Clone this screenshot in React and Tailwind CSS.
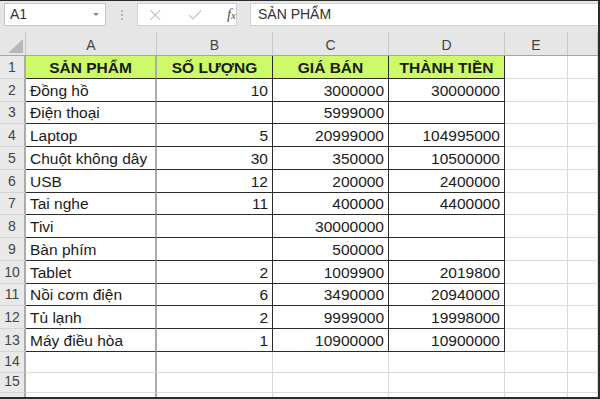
import React from 'react';

const COLS = [
  { key: 'A', w: 'w-[131px]' },
  { key: 'B', w: 'w-[116px]' },
  { key: 'C', w: 'w-[116px]' },
  { key: 'D', w: 'w-[116px]' },
  { key: 'E', w: 'w-[63px]' },
  { key: '', w: 'w-[30px]' },
];

const HEADERS = ['SẢN PHẨM', 'SỐ LƯỢNG', 'GIÁ BÁN', 'THÀNH TIỀN'];

const DATA = [
  ['Đồng hồ', '10', '3000000', '30000000'],
  ['Điện thoại', '', '5999000', ''],
  ['Laptop', '5', '20999000', '104995000'],
  ['Chuột không dây', '30', '350000', '10500000'],
  ['USB', '12', '200000', '2400000'],
  ['Tai nghe', '11', '400000', '4400000'],
  ['Tivi', '', '30000000', ''],
  ['Bàn phím', '', '500000', ''],
  ['Tablet', '2', '1009900', '2019800'],
  ['Nồi cơm điện', '6', '3490000', '20940000'],
  ['Tủ lạnh', '2', '9999000', '19998000'],
  ['Máy điều hòa', '1', '10900000', '10900000'],
];

// row heights in px, rows 1..15
const HEIGHTS = ['h-[23px]', 'h-[23px]', 'h-[22px]', 'h-[23px]', 'h-[23px]', 'h-[23px]', 'h-[22px]', 'h-[23px]', 'h-[23px]', 'h-[23px]', 'h-[22px]', 'h-[23px]', 'h-[23px]', 'h-[21px]', 'h-[20px]'];

function cellClass(ci, inTable) {
  const base = `${COLS[ci].w} shrink-0 h-full flex items-end pb-[1px] px-[4px] overflow-hidden whitespace-nowrap border-b`;
  const bottom = inTable ? 'border-b-[#2b2b2b]' : 'border-b-[#dadada]';
  let right;
  if (ci === 0) right = 'border-r-2 border-r-[#ababab]';
  else if (inTable && ci <= 3) right = 'border-r border-r-[#2b2b2b]';
  else right = 'border-r border-r-[#dadada]';
  return `${base} ${bottom} ${right}`;
}

function Row({ n, h, cells, header }) {
  const inTable = n && n <= 13;
  return (
    <div className={`flex ${h} shrink-0`}>
      <div className="w-[26px] shrink-0 h-full flex items-end pb-[2px] justify-center bg-[#e9e9e9] border-r-2 border-r-[#ababab] border-b border-b-[#d4d4d4] text-[14px] leading-[17px] text-[#444]">
        {n}
      </div>
      {COLS.map((c, ci) => {
        const v = cells ? cells[ci] : '';
        const green = header && ci <= 3;
        const align = header ? 'justify-center font-bold' : ci === 0 ? 'justify-start' : 'justify-end';
        return (
          <div key={ci} className={`${cellClass(ci, inTable && ci <= 3)} ${align} ${green ? 'bg-[#ccfa69]' : 'bg-white'}`}>
            <span className="leading-[19px]">{v}</span>
          </div>
        );
      })}
    </div>
  );
}

export default function App() {
  return (
    <div className="w-[600px] h-[399px] overflow-hidden bg-[#e6e6e6] border-t border-r-2 border-b-2 border-[#2b2b2b] flex flex-col text-[15.5px] text-[#1a1a1a]" style={{ fontFamily: '"Liberation Sans", Arial, sans-serif' }}>
      {/* formula bar */}
      <div className="h-[31px] shrink-0 flex items-start pt-[2px] pl-[4px]">
        <div className="w-[102px] h-[23px] bg-white border border-[#c6c6c6] flex items-center justify-between pl-[5px] pr-[6px]">
          <span className="text-[14px] text-[#333]">A1</span>
          <span className="w-0 h-0 border-l-[3px] border-r-[3px] border-t-[3px] border-l-transparent border-r-transparent border-t-[#888]" />
        </div>
        <div className="w-[31px] h-[23px] flex flex-col items-center justify-center gap-[2px]">
          <span className="w-[2px] h-[2px] bg-[#b5b5b5]" />
          <span className="w-[2px] h-[2px] bg-[#b5b5b5]" />
          <span className="w-[2px] h-[2px] bg-[#b5b5b5]" />
        </div>
        <div className="w-[100px] h-[23px] bg-white border border-[#d0d0d0] flex items-center">
          <svg width="14" height="14" viewBox="0 0 14 14" className="ml-[11px]">
            <path d="M1.5 1.5 L12.5 12.5 M12.5 1.5 L1.5 12.5" stroke="#a8a8a8" strokeWidth="1.1" fill="none" />
          </svg>
          <svg width="16" height="14" viewBox="0 0 16 14" className="ml-[26px]">
            <path d="M1.5 7.5 L5.5 11.5 L14.5 2" stroke="#b8b8b8" strokeWidth="1.2" fill="none" />
          </svg>
          <span className="ml-[25px] italic text-[#555] text-[15px]" style={{ fontFamily: '"Liberation Serif", "Times New Roman", serif' }}>
            f<span className="text-[11px]">x</span>
          </span>
        </div>
        <div className="ml-[13px] flex-1 h-[23px] bg-white border border-[#d0d0d0] border-r-0 flex items-center pl-[7px] text-[14px] text-[#333]">
          SẢN PHẨM
        </div>
      </div>
      {/* column headers */}
      <div className="h-[24px] shrink-0 flex border-b border-b-[#a6a6a6]">
        <div className="w-[26px] shrink-0 h-full relative border-r border-r-[#c8c8c8]">
          <svg width="15" height="14" viewBox="0 0 15 14" className="absolute right-[2px] bottom-[2px]">
            <path d="M15 0 L15 14 L0 14 Z" fill="#b7b7b7" />
          </svg>
        </div>
        {COLS.map((c, ci) => (
          <div key={ci} className={`${c.w} shrink-0 h-full flex items-center justify-center text-[14px] text-[#444] pt-[3px] border-r border-r-[#c8c8c8]`}>
            {c.key}
          </div>
        ))}
      </div>
      {/* grid */}
      <Row n={1} h={HEIGHTS[0]} cells={HEADERS} header />
      {DATA.map((r, i) => (
        <Row key={i} n={i + 2} h={HEIGHTS[i + 1]} cells={r} />
      ))}
      <Row n={14} h={HEIGHTS[13]} />
      <Row n={15} h={HEIGHTS[14]} />
      <Row n={null} h="h-[20px]" />
    </div>
  );
}
